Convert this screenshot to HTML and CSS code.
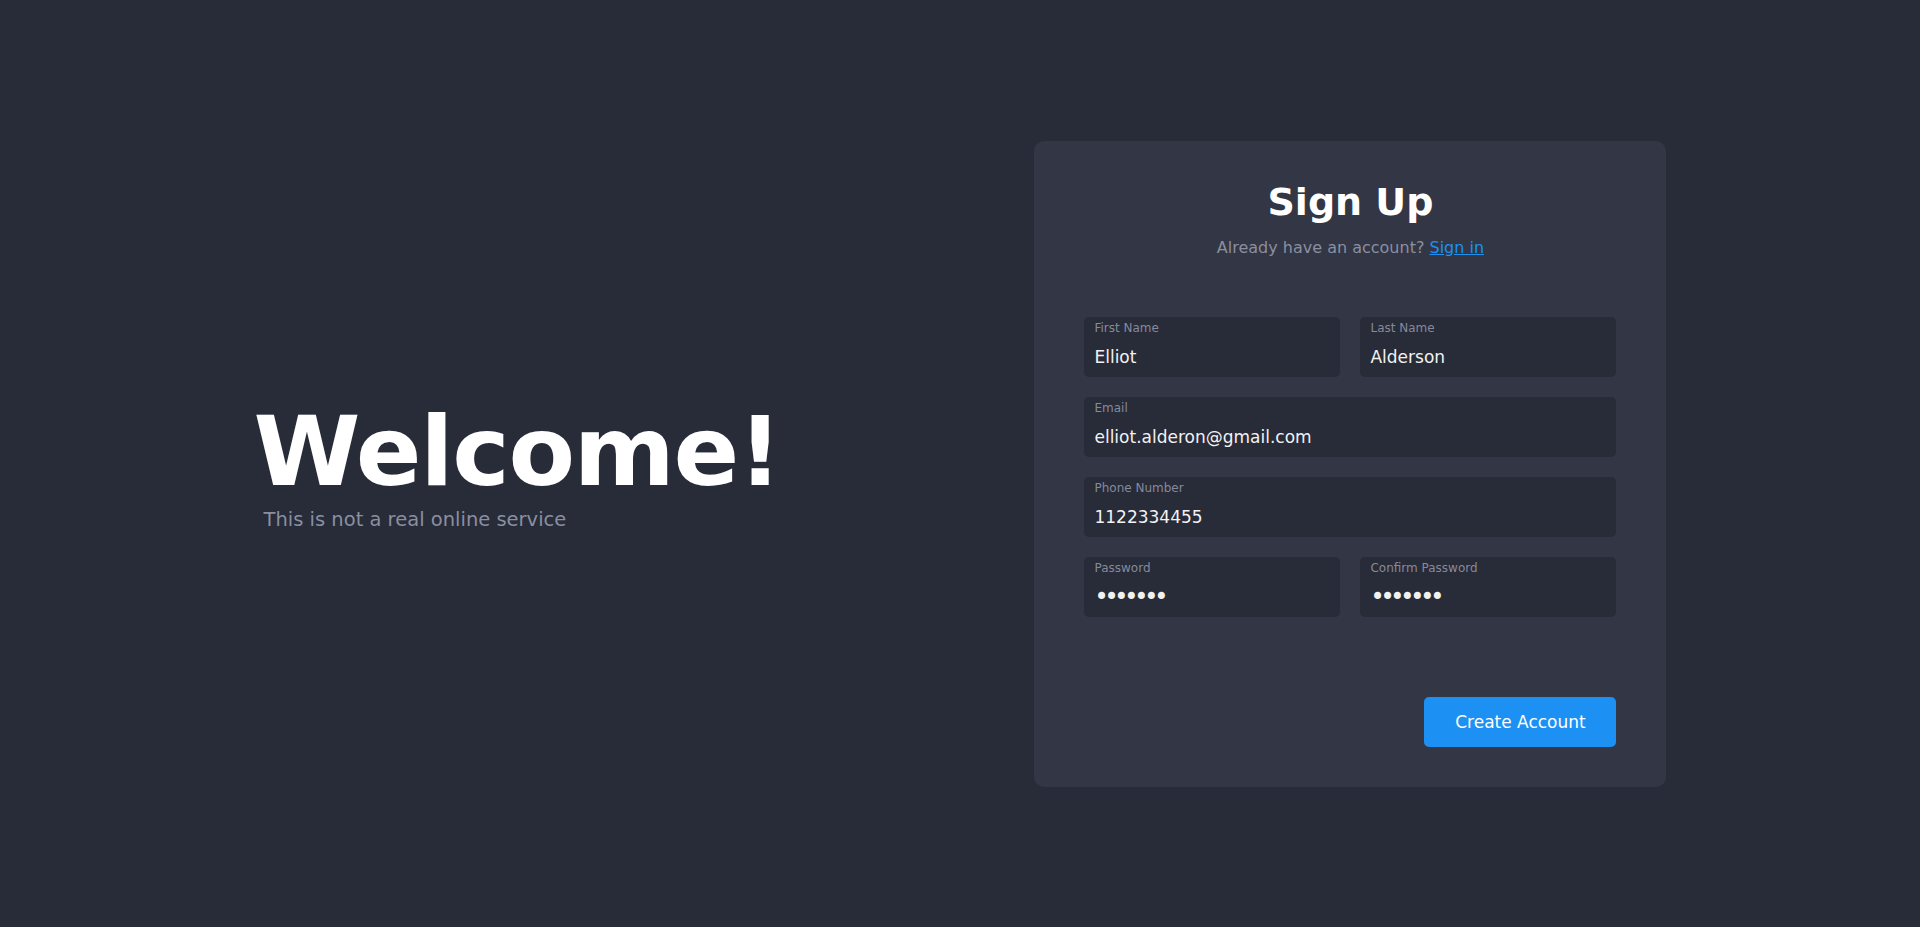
FILE: index.html
```html
<!DOCTYPE html>
<html lang="en">
<head>
<meta charset="utf-8">
<title>Sign Up</title>
<link rel="stylesheet" href="styles.css">
</head>
<body>
<main class="page">
  <section class="intro">
    <h1 class="intro-title">Welcome!</h1>
    <p class="intro-text">This is not a real online service</p>
  </section>
  <form class="card" onsubmit="return false">
    <header class="card-head">
      <h2 class="card-title">Sign Up</h2>
      <p class="card-sub">Already have an account? <a href="#" class="link">Sign in</a></p>
    </header>
    <div class="fields">
      <label class="field">
        <span class="field-label">First Name</span>
        <input class="field-input" type="text" value="Elliot">
      </label>
      <label class="field">
        <span class="field-label">Last Name</span>
        <input class="field-input" type="text" value="Alderson">
      </label>
      <label class="field field-wide">
        <span class="field-label">Email</span>
        <input class="field-input" type="email" value="elliot.alderon@gmail.com">
      </label>
      <label class="field field-wide">
        <span class="field-label">Phone Number</span>
        <input class="field-input" type="tel" value="1122334455">
      </label>
      <label class="field">
        <span class="field-label">Password</span>
        <input class="field-input field-secret" type="password" value="1234567">
      </label>
      <label class="field">
        <span class="field-label">Confirm Password</span>
        <input class="field-input field-secret" type="password" value="1234567">
      </label>
    </div>
    <div class="actions">
      <button class="btn" type="submit">Create Account</button>
    </div>
  </form>
</main>
</body>
</html>
```

FILE: styles.css
```css
html, body {
  margin: 0;
  padding: 0;
}

body {
  background: #282b38;
  font-family: "DejaVu Sans", "Noto Sans", sans-serif;
  color: #ffffff;
}

.page {
  height: 100vh;
  display: flex;
  align-items: center;
  justify-content: space-evenly;
}

/* Left intro */
.intro {
  padding-top: 7px;
}

.intro-title {
  margin: 0;
  font-size: 97px;
  line-height: 97px;
  font-weight: 700;
  letter-spacing: -1.3px;
  color: #ffffff;
}

.intro-text {
  margin: 8px 0 0;
  padding-left: 10px;
  font-size: 19.5px;
  line-height: 24px;
  color: #8a8fa0;
}

/* Card */
.card {
  width: 632px;
  box-sizing: border-box;
  padding: 40px 50px;
  background: #333644;
  border-radius: 10px;
  display: flex;
  flex-direction: column;
}

.card-head {
  text-align: center;
  margin-bottom: 59px;
}

.card-title {
  margin: 0;
  font-size: 38px;
  line-height: 42px;
  font-weight: 700;
  color: #ffffff;
}

.card-sub {
  margin: 15px 0 0;
  font-size: 16px;
  line-height: 20px;
  color: #8a8fa0;
}

.link {
  color: #1d90f4;
  text-decoration: underline;
}

.fields {
  display: grid;
  grid-template-columns: 1fr 1fr;
  gap: 20px;
}

.field {
  display: flex;
  flex-direction: column;
  height: 60px;
  box-sizing: border-box;
  padding: 4px 10px 0;
  background: #282b38;
  border-radius: 5px;
}

.field-wide {
  grid-column: span 2;
}

.field-label {
  display: block;
  font-size: 12px;
  line-height: 14px;
  color: #858a9b;
}

.field-input {
  display: block;
  margin-top: 10px;
  height: 24px;
  padding: 0;
  border: 0;
  outline: none;
  background: transparent;
  font-family: inherit;
  font-size: 17px;
  line-height: 24px;
  color: #f2f2f2;
  width: 100%;
}

.field-secret {
  font-size: 24px;
  letter-spacing: -4.2px;
}

.actions {
  display: flex;
  justify-content: flex-end;
  margin-top: 80px;
}

.btn {
  width: 192px;
  height: 50px;
  border: 0;
  border-radius: 5px;
  background: #1d90f4;
  color: #ffffff;
  font-family: inherit;
  font-size: 17px;
  cursor: pointer;
}
```
